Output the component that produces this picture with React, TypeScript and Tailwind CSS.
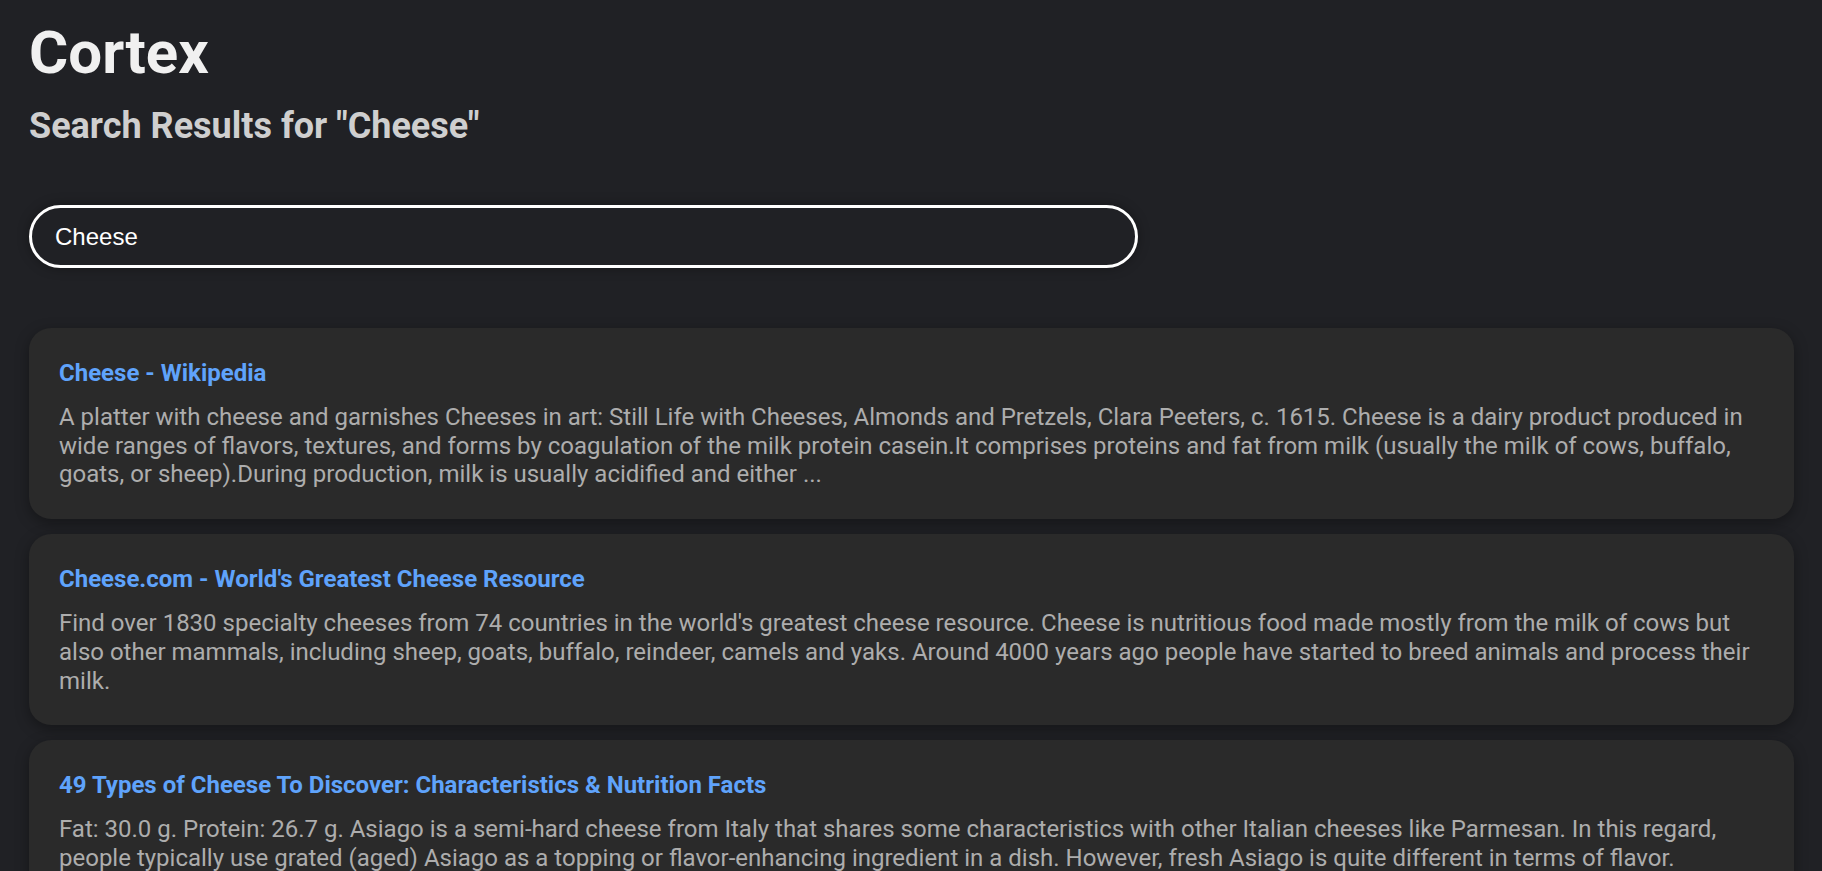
import React from "react";

const results = [
  {
    title: "Cheese - Wikipedia",
    snippet:
      "A platter with cheese and garnishes Cheeses in art: Still Life with Cheeses, Almonds and Pretzels, Clara Peeters, c. 1615. Cheese is a dairy product produced in wide ranges of flavors, textures, and forms by coagulation of the milk protein casein.It comprises proteins and fat from milk (usually the milk of cows, buffalo, goats, or sheep).During production, milk is usually acidified and either ...",
  },
  {
    title: "Cheese.com - World's Greatest Cheese Resource",
    snippet:
      "Find over 1830 specialty cheeses from 74 countries in the world's greatest cheese resource. Cheese is nutritious food made mostly from the milk of cows but also other mammals, including sheep, goats, buffalo, reindeer, camels and yaks. Around 4000 years ago people have started to breed animals and process their milk.",
  },
  {
    title: "49 Types of Cheese To Discover: Characteristics & Nutrition Facts",
    snippet:
      "Fat: 30.0 g. Protein: 26.7 g. Asiago is a semi-hard cheese from Italy that shares some characteristics with other Italian cheeses like Parmesan. In this regard, people typically use grated (aged) Asiago as a topping or flavor-enhancing ingredient in a dish. However, fresh Asiago is quite different in terms of flavor.",
  },
  {
    title: "Cheese | Definition, History, Production, Types, & Facts | Britannica",
    snippet:
      "cheese, nutritious food consisting primarily of the curd, or the semisolid substance formed when milk coagulates. Cheese is a concentrated dairy food made from milk.",
  },
];

const App = () => {
  return (
    <div className="min-h-screen bg-[#202125] pl-[29px] pr-[28px] pt-[23px] pb-10 font-['Roboto',sans-serif]">
      <h1 className="text-[60px] leading-[60px] font-bold text-[#f0f0f0]">Cortex</h1>
      <h2 className="mt-[25px] text-[36px] leading-[36px] font-bold text-[#cfcfcf]">
        Search Results for "Cheese"
      </h2>

      <input
        type="text"
        defaultValue="Cheese"
        className="mt-[61px] block h-[63px] w-[1109px] rounded-full border-[3px] border-white bg-[#202125] pl-[23px] font-['Liberation_Sans',Arial,sans-serif] text-[24px] text-white shadow-[0_0_12px_rgba(0,0,0,0.35)] outline-none"
      />

      {/* results list */}
      <div className="mt-[60px] flex flex-col gap-[15px]">
        {results.map((r) => (
          <div
            key={r.title}
            className="rounded-[22px] bg-[#2a2a2a] px-[30px] pt-[31px] pb-[30px] shadow-[0_4px_14px_rgba(0,0,0,0.35)]"
          >
            <h3 className="text-[24px] leading-[28.8px] font-bold text-[#5fa3fb]">{r.title}</h3>
            <p className="mt-[15px] text-[24px] leading-[28.8px] text-[#adadad]">{r.snippet}</p>
          </div>
        ))}
      </div>
    </div>
  );
};

export default App;
